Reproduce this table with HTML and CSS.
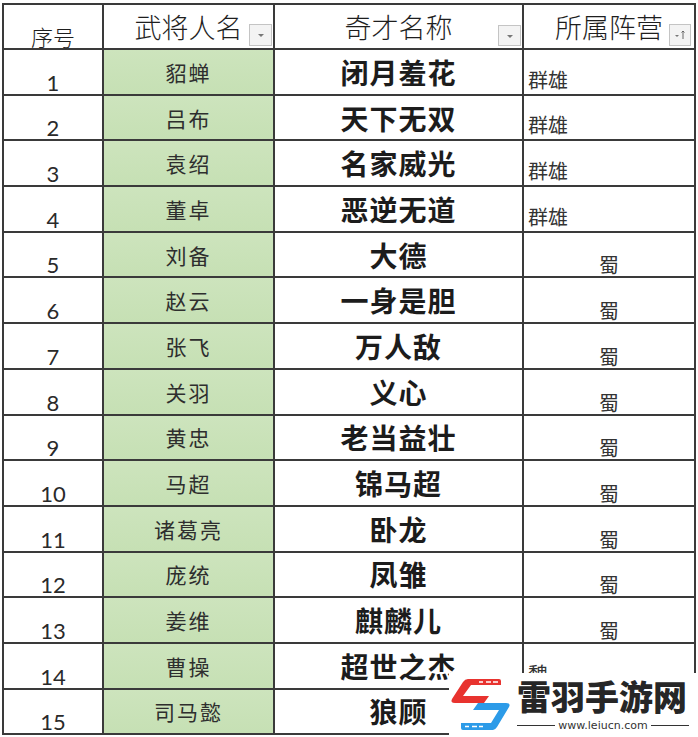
FILE: index.html
```html
<!DOCTYPE html>
<html lang="zh">
<head>
<meta charset="utf-8">
<link rel="stylesheet" href="styles.css">
</head>
<body>
<div class="sheet">
<table class="grid">
  <colgroup><col class="c1"><col class="c2"><col class="c3"><col class="c4"></colgroup>
  <thead>
    <tr>
      <th class="h-no">序号</th>
      <th class="h-big">武将人名<span class="filter f2"><svg viewBox="0 0 10 10" width="10" height="10"><path d="M2 4 L8 4 L5 7 Z" fill="#777"/></svg></span></th>
      <th class="h-big">奇才名称<span class="filter f3"><svg viewBox="0 0 10 10" width="10" height="10"><path d="M2 4 L8 4 L5 7 Z" fill="#777"/></svg></span></th>
      <th class="h-big">所属阵营<span class="filter f4"><svg viewBox="0 0 14 14" width="14" height="14"><path d="M2 7 L6 7 L4 9 Z" fill="#777"/><path d="M10 3 L10 11" stroke="#666" stroke-width="1"/><path d="M8.5 4.5 L10 3 L11.5 4.5" stroke="#666" stroke-width="1" fill="none"/></svg></span></th>
    </tr>
  </thead>
  <tbody>
    <tr><td class="no">1</td><td class="name">貂蝉</td><td class="skill">闭月羞花</td><td class="camp left">群雄</td></tr>
    <tr><td class="no">2</td><td class="name">吕布</td><td class="skill">天下无双</td><td class="camp left">群雄</td></tr>
    <tr><td class="no">3</td><td class="name">袁绍</td><td class="skill">名家威光</td><td class="camp left">群雄</td></tr>
    <tr><td class="no">4</td><td class="name">董卓</td><td class="skill">恶逆无道</td><td class="camp left">群雄</td></tr>
    <tr><td class="no">5</td><td class="name">刘备</td><td class="skill">大德</td><td class="camp">蜀</td></tr>
    <tr><td class="no">6</td><td class="name">赵云</td><td class="skill">一身是胆</td><td class="camp">蜀</td></tr>
    <tr><td class="no">7</td><td class="name">张飞</td><td class="skill">万人敌</td><td class="camp">蜀</td></tr>
    <tr><td class="no">8</td><td class="name">关羽</td><td class="skill">义心</td><td class="camp">蜀</td></tr>
    <tr><td class="no">9</td><td class="name">黄忠</td><td class="skill">老当益壮</td><td class="camp">蜀</td></tr>
    <tr><td class="no">10</td><td class="name">马超</td><td class="skill">锦马超</td><td class="camp">蜀</td></tr>
    <tr><td class="no">11</td><td class="name">诸葛亮</td><td class="skill">卧龙</td><td class="camp">蜀</td></tr>
    <tr><td class="no">12</td><td class="name">庞统</td><td class="skill">凤雏</td><td class="camp">蜀</td></tr>
    <tr><td class="no">13</td><td class="name">姜维</td><td class="skill">麒麟儿</td><td class="camp">蜀</td></tr>
    <tr><td class="no">14</td><td class="name">曹操</td><td class="skill">超世之杰</td><td class="camp left top">魏</td></tr>
    <tr><td class="no">15</td><td class="name">司马懿</td><td class="skill">狼顾</td><td class="camp left"></td></tr>
  </tbody>
</table>

<div class="watermark">
  <svg class="logo" viewBox="0 0 64 58" width="64" height="58">
    <path d="M19 3 H50 Q52 3 52 5 V9 H22 L14 20 H40 L35 27 H6 Q1 27 3 23 L14 6 Q16 3 19 3 Z" fill="#e8332f"/>
    <path d="M30 6 H34 M37 6 H42 M44 6 H49" stroke="#fff" stroke-width="1.4"/>
    <path d="M44 54 H14 Q12 54 12 52 V47 H42 L50 34 H24 L29 27 H57 Q62 27 60 31 L48 51 Q46 54 44 54 Z" fill="#2c9be8"/>
    <path d="M16 50.5 H20 M23 50.5 H28 M30 50.5 H34" stroke="#fff" stroke-width="1.4"/>
  </svg>
  <div class="brand">
    <div class="brand-name">雷羽手游网</div>
    <div class="brand-url"><span class="rule"></span><span class="url">www.leiucn.com</span><span class="rule"></span></div>
  </div>
</div>
</div>
</body>
</html>
```

FILE: styles.css
```css
html, body {
  margin: 0;
  padding: 0;
  background: #ffffff;
}

.sheet {
  position: relative;
  width: 698px;
  height: 737px;
  overflow: hidden;
  padding: 3px 0 0 2px;
  box-sizing: border-box;
}

.grid {
  border-collapse: collapse;
  table-layout: fixed;
  width: 694px;
  border: 2px solid #3a3a3a;
  font-family: "Noto Sans CJK SC", "Noto Sans", sans-serif;
  color: #222;
}

.c1 { width: 100px; }
.c2 { width: 171px; }
.c3 { width: 249px; }
.c4 { width: 172px; }

.grid th, .grid td {
  border: 2px solid #3a3a3a;
  padding: 0;
  position: relative;
}

.grid thead tr { height: 45px; }
.grid tbody tr { height: 45.7px; }

.grid th {
  font-weight: 300;
  color: #1e1e1e;
}

.h-big {
  font-size: 27px;
  line-height: 30px;
  vertical-align: middle;
  text-align: center;
  padding-bottom: 4px;
}

.h-no {
  font-size: 22px;
  line-height: 24px;
  vertical-align: bottom;
  text-align: center;
  padding-bottom: 0;
}

.filter {
  position: absolute;
  bottom: 2px;
  width: 23px;
  height: 22px;
  background: #f3f3f3;
  border: 1px solid #c4c4c4;
  box-sizing: border-box;
  display: flex;
  align-items: center;
  justify-content: center;
}
.f2 { right: 1px; }
.f3 { right: 1px; height: 21px; }
.f4 { right: 3px; width: 22px; }

.no {
  font-family: Lato, "Liberation Sans", sans-serif;
  font-weight: 400;
  font-size: 22px;
  line-height: 22px;
  text-align: center;
  vertical-align: bottom;
  padding-bottom: 2px;
  color: #2a2a2a;
}

.name {
  background: linear-gradient(180deg, #cde4bd 0%, #c6e0b4 100%);
  text-align: center;
  vertical-align: middle;
  font-size: 21px;
  line-height: 24px;
  letter-spacing: 2px;
  color: #2e2e2e;
  padding-top: 3px;
}

.skill {
  text-align: center;
  vertical-align: middle;
  font-size: 28px;
  font-weight: 700;
  line-height: 30px;
  letter-spacing: 1px;
  color: #1c1c1c;
  padding-top: 3px;
}

.camp {
  font-size: 20px;
  line-height: 22px;
  vertical-align: bottom;
  text-align: center;
  padding-bottom: 1px;
  color: #333;
}

.camp.left {
  text-align: left;
  padding-left: 4px;
  padding-bottom: 3px;
}

.camp.top {
  vertical-align: top;
  padding-top: 19px;
  padding-bottom: 0;
}

.watermark {
  position: absolute;
  left: 449px;
  top: 673px;
  width: 249px;
  height: 64px;
  background: #ffffff;
  display: flex;
  align-items: flex-start;
}

.logo {
  margin-top: 3px;
  flex: none;
}

.brand {
  margin-left: 4px;
  display: flex;
  flex-direction: column;
  align-items: stretch;
  width: 172px;
}

.brand-name {
  font-family: "Noto Sans CJK SC", sans-serif;
  font-weight: 900;
  font-size: 34px;
  line-height: 36px;
  color: #262626;
  margin-top: 5px;
}

.brand-url {
  display: flex;
  align-items: center;
  gap: 3px;
  margin-top: 5px;
}

.rule {
  flex: 1;
  height: 1px;
  background: #333;
}

.url {
  font-family: "DejaVu Sans", sans-serif;
  font-size: 11px;
  line-height: 13px;
  color: #333;
}
```
